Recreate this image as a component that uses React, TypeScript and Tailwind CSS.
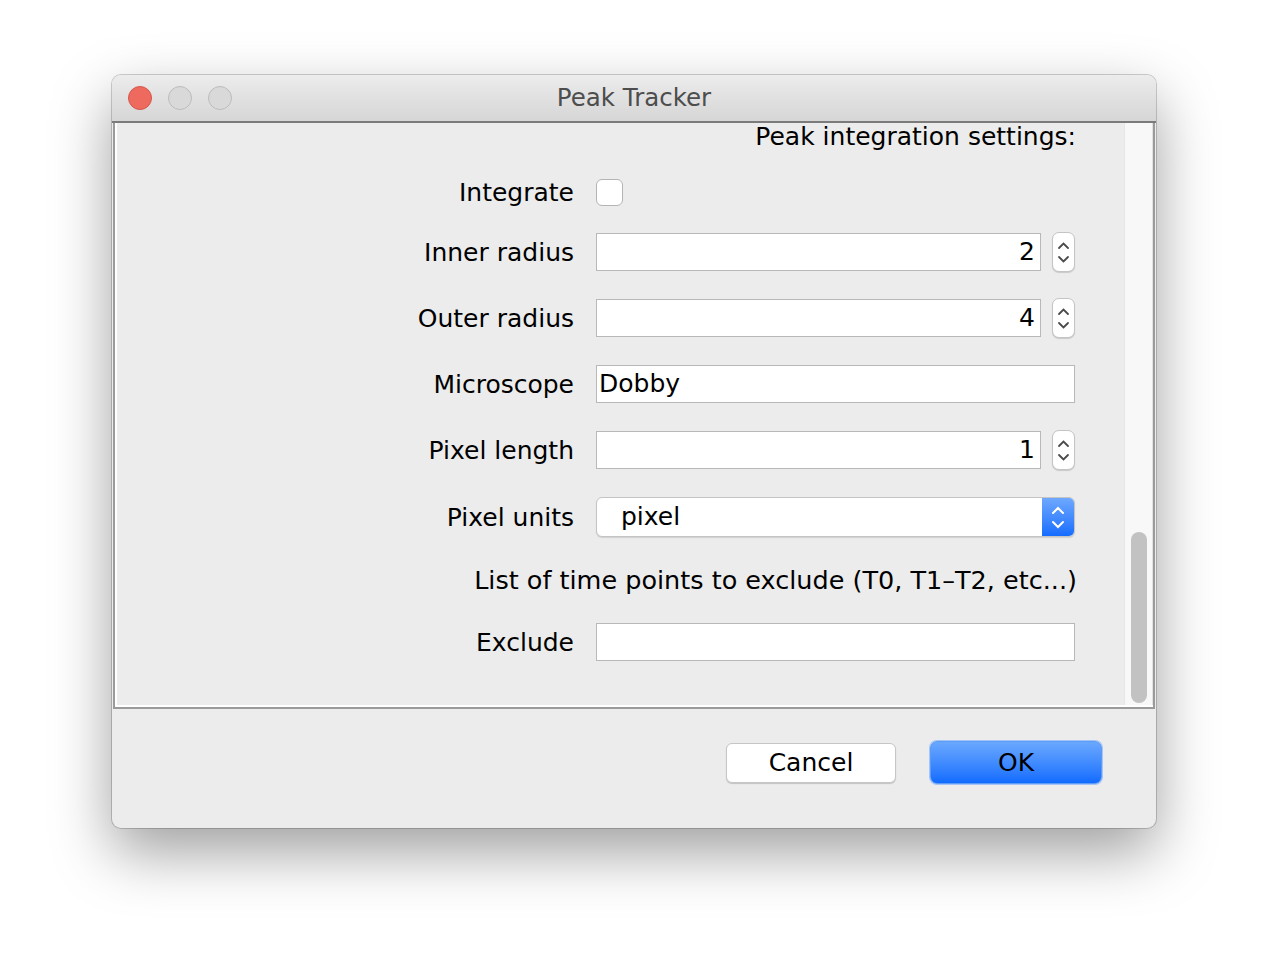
import React from 'react';

const font = { fontFamily: '"DejaVu Sans", "Liberation Sans", sans-serif' };

const Spinner = () => (
  <div className="w-[23px] h-[40px] bg-white border border-[#c4c4c4] rounded-[7px] shadow-[0_1px_1px_rgba(0,0,0,0.15)] flex flex-col items-center justify-center gap-[5px]">
    <svg width="13" height="9" viewBox="0 0 13 9">
      <path d="M2 7 L6.5 2.5 L11 7" fill="none" stroke="#4a4a4a" strokeWidth="1.8" strokeLinecap="round" />
    </svg>
    <svg width="13" height="9" viewBox="0 0 13 9">
      <path d="M2 2 L6.5 6.5 L11 2" fill="none" stroke="#4a4a4a" strokeWidth="1.8" strokeLinecap="round" />
    </svg>
  </div>
);

const Label = ({ children }: { children: React.ReactNode }) => (
  <div className="w-[457px] text-right text-[25px] text-black leading-none">{children}</div>
);

const Field = ({ value, spinner = false }: { value?: string; spinner?: boolean }) => (
  <div className="flex items-center gap-[11px]">
    <div
      className={`h-[38px] bg-white border border-[#b8b8b8] flex items-center text-[25px] text-black px-[2px] ${
        spinner ? 'w-[445px] justify-end pr-[5px]' : 'w-[479px]'
      }`}
    >
      {value}
    </div>
    {spinner && <Spinner />}
  </div>
);

export default function App() {
  return (
    <div className="min-h-[976px] bg-white pt-[75px] pl-[112px]" style={font}>
      <div className="w-[1044px] rounded-[9px] bg-[#ececec] shadow-[0_24px_60px_rgba(0,0,0,0.38),0_0_0_1px_rgba(0,0,0,0.18)] overflow-hidden">
        {/* title bar */}
        <div className="h-[48px] bg-gradient-to-b from-[#ececec] to-[#d6d6d6] flex items-center relative border-b-2 border-[#7b7b7b]">
          <div className="flex items-center gap-[16px] pl-[16px]">
            <div className="w-[24px] h-[24px] rounded-full bg-[#ee6a5e] border border-[#d4574c]" />
            <div className="w-[24px] h-[24px] rounded-full bg-[#d9d9d9] border border-[#bcbcbc]" />
            <div className="w-[24px] h-[24px] rounded-full bg-[#d9d9d9] border border-[#bcbcbc]" />
          </div>
          <div className="absolute inset-0 flex items-center justify-center text-[24.5px] text-[#4d4d4d]">Peak Tracker</div>
        </div>

        {/* scroll pane */}
        <div className="h-[586px] flex border-l-2 border-r-2 border-b-2 border-[#9a9a9a] mx-[1px]">
          <div className="flex-1 flex border-l-2 border-b-2 border-white">
            <div className="flex-1 flex flex-col">
              <div className="h-[28px] flex items-center justify-end pr-[48px] text-[25px] text-black">Peak integration settings:</div>

              <div className="mt-[21px] h-[40px] flex items-center gap-[22px]">
                <Label>Integrate</Label>
                <div className="w-[27px] h-[27px] bg-white border border-[#b4b4b4] rounded-[6px]" />
              </div>

              <div className="mt-[20px] h-[40px] flex items-center gap-[22px]">
                <Label>Inner radius</Label>
                <Field value="2" spinner />
              </div>

              <div className="mt-[26px] h-[40px] flex items-center gap-[22px]">
                <Label>Outer radius</Label>
                <Field value="4" spinner />
              </div>

              <div className="mt-[26px] h-[40px] flex items-center gap-[22px]">
                <Label>Microscope</Label>
                <Field value="Dobby" />
              </div>

              <div className="mt-[26px] h-[40px] flex items-center gap-[22px]">
                <Label>Pixel length</Label>
                <Field value="1" spinner />
              </div>

              <div className="mt-[27px] h-[40px] flex items-center gap-[22px]">
                <Label>Pixel units</Label>
                <div className="w-[479px] h-[40px] rounded-[6px] border border-[#c4c4c4] bg-white flex overflow-hidden shadow-[0_1px_1px_rgba(0,0,0,0.12)]">
                  <div className="flex-1 flex items-center pl-[24px] text-[25px] text-black">pixel</div>
                  <div className="w-[32px] bg-gradient-to-b from-[#6ea8ff] to-[#136cff] flex flex-col items-center justify-center gap-[5px]">
                    <svg width="14" height="9" viewBox="0 0 14 9">
                      <path d="M2 7 L7 2 L12 7" fill="none" stroke="white" strokeWidth="2" strokeLinecap="round" />
                    </svg>
                    <svg width="14" height="9" viewBox="0 0 14 9">
                      <path d="M2 2 L7 7 L12 2" fill="none" stroke="white" strokeWidth="2" strokeLinecap="round" />
                    </svg>
                  </div>
                </div>
              </div>

              <div className="mt-[23px] h-[40px] flex items-center justify-end pr-[47px] text-[25.5px] text-black">
                List of time points to exclude (T0, T1–T2, etc...)
              </div>

              <div className="mt-[22px] h-[40px] flex items-center gap-[22px]">
                <Label>Exclude</Label>
                <Field />
              </div>
            </div>

            {/* scrollbar track */}
            <div className="w-[29px] bg-[#f8f8f8] border-l border-[#e6e6e6] border-r border-r-[#e0e0e0] flex flex-col justify-end items-center pb-[2px]">
              <div className="w-[16px] h-[171px] rounded-full bg-[#c2c2c2]" />
            </div>
          </div>
        </div>

        {/* buttons */}
        <div className="h-[119px] flex items-start justify-end pr-[54px] gap-[34px]">
          <button className="mt-[34px] w-[170px] h-[40px] rounded-[6px] bg-white border border-[#c6c6c6] shadow-[0_1px_1px_rgba(0,0,0,0.18)] text-[25px] text-black">
            Cancel
          </button>
          <button className="mt-[32px] w-[172px] h-[43px] rounded-[7px] bg-gradient-to-b from-[#6aa8ff] to-[#0f6bff] border border-[#5c9cf5] shadow-[0_0_0_1px_rgba(120,170,255,0.6)] text-[25px] text-black">
            OK
          </button>
        </div>
      </div>
    </div>
  );
}
